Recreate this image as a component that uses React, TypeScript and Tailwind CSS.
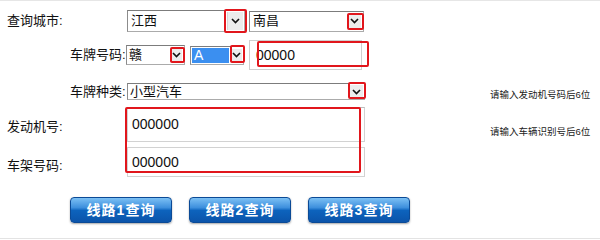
import React from "react";

const Chevron = () => (
  <svg width="9" height="6" viewBox="0 0 9 6" className="block">
    <path d="M1 1 L4.5 4.6 L8 1" fill="none" stroke="#111" strokeWidth="1.6" />
  </svg>
);

const ArrowBox = ({ className }: { className: string }) => (
  <div
    className={`flex items-center justify-center bg-[#ececec] border-l border-[#d6d6d6] ${className}`}
  >
    <Chevron />
  </div>
);

const RedBox = ({ className }: { className: string }) => (
  <div
    className={`absolute border-2 border-[#e1161c] rounded-[2px] pointer-events-none ${className}`}
  />
);

const selectBorder =
  "border border-[#ababab] border-t-[#7c7c7c] border-l-[#8c8c8c] bg-white";

const QueryButton = ({ label }: { label: string }) => (
  <button className="w-[102px] h-[26px] rounded-[4px] border border-[#0b4a96] bg-[linear-gradient(to_bottom,#7cc0f4_0%,#3d8fdd_40%,#0d63bd_52%,#0b54aa_100%)] shadow-[0_1px_2px_rgba(0,0,0,0.35)] text-white text-[14px] font-bold tracking-[1px] leading-none">
    {label}
  </button>
);

export default function App() {
  return (
    <div className="relative w-[600px] h-[240px] bg-white overflow-hidden border-t border-[#e6e6e6] font-['Liberation_Sans','Noto_Sans_CJK_SC',sans-serif] text-[13px] text-[#111]">
      {/* 查询城市 */}
      <div className="flex items-center h-[22px] mt-[9px]">
        <div className="w-[127px] pl-[7px]">查询城市:</div>
        <div className={`relative flex items-center w-[118px] h-[22px] ${selectBorder}`}>
          <span className="flex-1 pl-[3px]">江西</span>
          <ArrowBox className="w-[16px] h-[18px] mr-[1px]" />
          <RedBox className="left-[96px] -top-[2px] w-[23px] h-[24px]" />
        </div>
        <div className={`relative flex items-center w-[115px] h-[21px] ml-[4px] ${selectBorder}`}>
          <span className="flex-1 pl-[3px]">南昌</span>
          <ArrowBox className="w-[14px] h-[14px] mr-[2px]" />
          <RedBox className="left-[97px] top-[1px] w-[17px] h-[17px]" />
        </div>
      </div>

      {/* 车牌号码 */}
      <div className="flex items-center h-[30px] mt-[8px]">
        <div className="w-[126px] pl-[70px]">车牌号码:</div>
        <div className={`relative flex items-center w-[59px] h-[20px] ${selectBorder}`}>
          <span className="flex-1 pl-[2px]">赣</span>
          <ArrowBox className="w-[12px] h-[13px] mr-[2px]" />
          <RedBox className="left-[43px] top-[1px] w-[15px] h-[16px]" />
        </div>
        <div className={`relative flex items-center w-[54px] h-[19px] ml-[5px] ${selectBorder}`}>
          <span className="flex-1 h-[15px] ml-[1px] pl-[2px] bg-[#3b8ff0] text-white text-[14px] leading-[15px]">
            A
          </span>
          <ArrowBox className="w-[12px] h-[13px] mx-[1px]" />
          <RedBox className="left-[39px] -top-[2px] w-[15px] h-[18px]" />
        </div>
        <div className="relative flex items-center w-[113px] h-[30px] ml-[5px] border border-[#cfcfcf] bg-white">
          <span className="pl-[6px] text-[14px]">00000</span>
          <RedBox className="left-[7px] top-0 w-[112px] h-[26px]" />
        </div>
      </div>

      {/* 车牌种类 */}
      <div className="flex items-start h-[18px] mt-[13px]">
        <div className="w-[127px] shrink-0 pl-[70px] leading-[17px]">车牌种类:</div>
        <div className={`relative shrink-0 flex items-center w-[238px] h-[17px] ${selectBorder}`}>
          <span className="flex-1 pl-[2px] leading-[15px]">小型汽车</span>
          <ArrowBox className="w-[14px] h-[13px] mr-[1px]" />
          <RedBox className="left-[220px] -top-[2px] w-[18px] h-[17px]" />
        </div>
        <div className="ml-[125px] mt-[6px] whitespace-nowrap text-[9.5px] leading-[12px] text-[#222]">
          请输入发动机号码后6位
        </div>
      </div>

      {/* 发动机号 / 车架号码 */}
      <div className="flex mt-[6px]">
        <div className="w-[127px] shrink-0 pl-[7px] flex flex-col">
          <div className="h-[35px] flex items-center pt-[4px]">发动机号:</div>
          <div className="h-[35px] flex items-center pt-[13px]">车架号码:</div>
        </div>
        <div className="relative shrink-0 w-[238px] flex flex-col gap-[5px]">
          <div className="h-[35px] border border-[#d2d2d2] border-t-[#bdbdbd] bg-white flex items-start pl-[4px] pt-[6px] text-[14px]">
            000000
          </div>
          <div className="h-[30px] border border-[#d2d2d2] bg-white flex items-start pl-[4px] pt-[4px] text-[14px]">
            000000
          </div>
          <RedBox className="-left-[2px] top-0 w-[236px] h-[66px]" />
        </div>
        <div className="ml-[125px] pt-[19px] whitespace-nowrap text-[9.5px] leading-[12px] text-[#222]">
          请输入车辆识别号后6位
        </div>
      </div>

      {/* buttons */}
      <div className="flex gap-[17px] pl-[70px] mt-[20px]">
        <QueryButton label="线路1查询" />
        <QueryButton label="线路2查询" />
        <QueryButton label="线路3查询" />
      </div>

      <div className="absolute left-0 right-0 top-[237px] h-px bg-[#e3e3e3]" />
    </div>
  );
}
